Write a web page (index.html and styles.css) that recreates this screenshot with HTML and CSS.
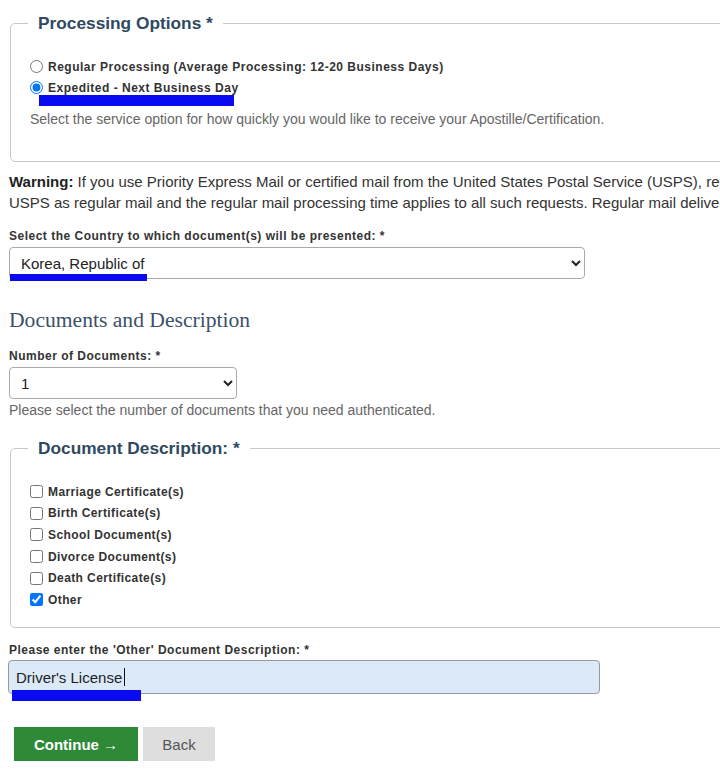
FILE: index.html
```html
<!DOCTYPE html>
<html lang="en">
  <head>
    <meta charset="UTF-8" />
    <meta name="viewport" content="width=device-width, initial-scale=1.0" />
    <title>Apostille Request</title>
    <link rel="stylesheet" href="styles.css">
  </head>
  <body>
    <main class="page">
      <fieldset class="group group-processing">
        <legend>Processing Options *</legend>
        <div class="choices">
          <label class="choice">
            <input type="radio" name="processing" />
            Regular Processing (Average Processing: 12-20 Business Days)
          </label>
          <label class="choice marked">
            <input type="radio" name="processing" checked />
            Expedited - Next Business Day
            <span class="mark mark-expedited"></span>
          </label>
        </div>
        <p class="help">Select the service option for how quickly you would like to receive your Apostille/Certification.</p>
      </fieldset>

      <p class="warning"><b>Warning:</b> If you use Priority Express Mail or certified mail from the United States Postal Service (USPS), requests will be received by the<br>USPS as regular mail and the regular mail processing time applies to all such requests. Regular mail delivery may take up to several weeks.</p>

      <div class="field">
        <label class="field-label" for="country">Select the Country to which document(s) will be presented: *</label>
        <div class="marked">
          <select id="country" class="select select-country">
            <option>Korea, Republic of</option>
          </select>
          <span class="mark mark-country"></span>
        </div>
      </div>

      <h2 class="section-title">Documents and Description</h2>

      <div class="field field-count">
        <label class="field-label" for="count">Number of Documents: *</label>
        <select id="count" class="select select-count">
          <option>1</option>
          <option>2</option>
          <option>3</option>
        </select>
        <p class="help">Please select the number of documents that you need authenticated.</p>
      </div>

      <fieldset class="group group-docs">
        <legend>Document Description: *</legend>
        <div class="choices">
          <label class="choice"><input type="checkbox" /> Marriage Certificate(s)</label>
          <label class="choice"><input type="checkbox" /> Birth Certificate(s)</label>
          <label class="choice"><input type="checkbox" /> School Document(s)</label>
          <label class="choice"><input type="checkbox" /> Divorce Document(s)</label>
          <label class="choice"><input type="checkbox" /> Death Certificate(s)</label>
          <label class="choice"><input type="checkbox" checked /> Other</label>
        </div>
      </fieldset>

      <div class="field field-other">
        <label class="field-label" for="other">Please enter the 'Other' Document Description: *</label>
        <div class="marked">
          <input id="other" class="text-input" type="text" value="Driver's License" />
          <span class="caret"></span>
          <span class="mark mark-other"></span>
        </div>
      </div>

      <div class="actions">
        <button class="btn btn-continue">Continue &rarr;</button>
        <button class="btn btn-back">Back</button>
      </div>
    </main>
  </body>
</html>
```

FILE: styles.css
```css
* {
  margin: 0;
  padding: 0;
  box-sizing: border-box;
}
html,
body {
  overflow: hidden;
}
body {
  background-color: #fff;
  font-family: "Liberation Sans", Arial, sans-serif;
  color: #333;
}
.page {
  width: 1100px;
  padding: 13px 0 0 9px;
}
.group {
  border: 1px solid #c9c9c9;
  border-radius: 5px;
  margin-left: 1px;
  padding: 22px 17px 32px;
}
.group legend {
  padding: 0 10px;
  font-size: 17.3px;
  line-height: 21px;
  font-weight: bold;
  color: #2f4a60;
}
.choices {
  display: flex;
  flex-direction: column;
}
.choice {
  position: relative;
  display: flex;
  align-items: center;
  gap: 5px;
  height: 21px;
  font-size: 12px;
  font-weight: bold;
  letter-spacing: 0.5px;
  color: #333;
}
.choice input {
  margin: 0 0 0 2px;
  width: 13px;
  height: 13px;
}
.group-processing .help {
  margin-top: 11px;
  padding-left: 2px;
}
.help {
  font-size: 14px;
  line-height: 20px;
  color: #666;
}
.warning {
  margin-top: 9px;
  font-size: 15px;
  line-height: 21px;
  color: #333;
  white-space: nowrap;
}
.warning b {
  color: #222;
}
.field {
  margin-top: 16px;
}
.field-label {
  display: block;
  font-size: 12px;
  line-height: 14px;
  font-weight: bold;
  letter-spacing: 0.5px;
  color: #333;
  margin-bottom: 4px;
}
.marked {
  position: relative;
}
.select {
  display: block;
  height: 32px;
  border: 1px solid #a9a9a9;
  border-radius: 4px;
  background-color: #fff;
  font-family: "Liberation Sans", Arial, sans-serif;
  font-size: 15px;
  color: #222;
  padding: 0 7px;
}
.select-country {
  width: 576px;
}
.select-count {
  width: 228px;
}
.section-title {
  margin-top: 28px;
  font-family: "Liberation Serif", "Times New Roman", serif;
  font-weight: normal;
  font-size: 21.6px;
  line-height: 26px;
  color: #3b5168;
}
.field-count .help {
  margin-top: 1px;
  line-height: 21px;
}
.group-docs {
  margin-top: 17px;
  padding-top: 22px;
  padding-bottom: 17px;
}
.group-docs .choice {
  letter-spacing: 0.4px;
}
.group-docs .choices {
  gap: 0.7px;
}
.field-other {
  margin-top: 15px;
}
.field-other .field-label {
  margin-bottom: 3px;
}
.text-input {
  display: block;
  width: 592px;
  height: 34px;
  margin-left: -1px;
  border: 1px solid #999;
  border-radius: 4px;
  background-color: #dce9f8;
  font-family: "Liberation Sans", Arial, sans-serif;
  font-size: 15px;
  color: #222;
  padding: 0 7px;
  outline: none;
}
.caret {
  position: absolute;
  left: 115px;
  top: 8px;
  width: 1px;
  height: 18px;
  background-color: #111;
}
.mark {
  position: absolute;
  background-color: #0a0af0;
}
.mark-expedited {
  left: 11px;
  top: 18px;
  width: 195px;
  height: 11px;
}
.mark-country {
  left: 1px;
  top: 27px;
  width: 137px;
  height: 7px;
}
.mark-other {
  left: 3px;
  top: 30px;
  width: 129px;
  height: 11px;
}
.actions {
  display: flex;
  gap: 5px;
  margin: 33px 0 0 5px;
}
.btn {
  height: 34px;
  border: none;
  font-family: "Liberation Sans", Arial, sans-serif;
  font-size: 15px;
}
.btn-continue {
  width: 124px;
  background-color: #2e8a36;
  color: #fff;
  font-weight: bold;
}
.btn-back {
  width: 72px;
  background-color: #dedede;
  color: #555;
}
```
